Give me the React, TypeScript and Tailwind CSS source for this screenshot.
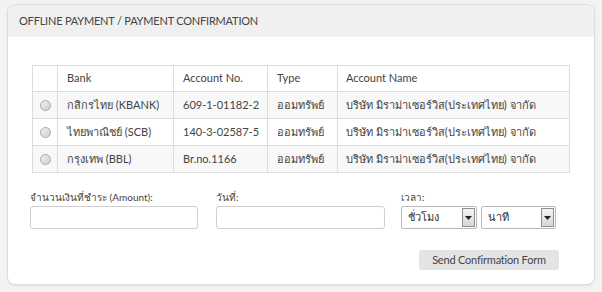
import React from 'react';

const FONT = { fontFamily: 'Lato, "Noto Sans", "DejaVu Sans", sans-serif' };

const banks = [
  { bank: 'กสิกรไทย (KBANK)', account: '609-1-01182-2' },
  { bank: 'ไทยพาณิชย์ (SCB)', account: '140-3-02587-5' },
  { bank: 'กรุงเทพ (BBL)', account: 'Br.no.1166' },
];

const Radio = () => (
  <span className="inline-block w-[11px] h-[11px] rounded-full border border-[#a9a9a9] bg-gradient-to-br from-[#f0f0f0] to-[#cfcfcf]" />
);

const Select = ({ label, width }: { label: string; width: string }) => (
  <div className={`${width} h-[23px] flex items-center border border-[#b9b9b9] rounded-[2px] bg-white`}>
    <span className="flex-1 pl-[6px] text-[11px] text-[#333]">{label}</span>
    <span className="w-[13px] h-[19px] mr-[1px] flex items-center justify-center border border-[#8f8f8f] bg-gradient-to-b from-[#f4f4f4] to-[#d8d8d8]">
      <svg width="7" height="4" viewBox="0 0 7 4">
        <path d="M0 0 L7 0 L3.5 4 Z" fill="#222" />
      </svg>
    </span>
  </div>
);

export default function App() {
  return (
    <div className="w-[602px] h-[292px] bg-[#f3f3f3] pt-[4px] pl-[7px]" style={FONT}>
      <div className="w-[588px] h-[281px] bg-white border border-[#dcdcdc] rounded-[8px] overflow-hidden shadow-[0_1px_2px_rgba(0,0,0,0.08)]">
        <div className="h-[32px] bg-[#f0f0f0] flex items-center pl-[11px] text-[11px] tracking-[-0.2px] text-[#444] uppercase">
          Offline Payment / Payment Confirmation
        </div>

        <div className="pl-[24px] pt-[28px]">
          <table className="border-collapse text-[11px] text-[#444] w-[538px]">
            <thead>
              <tr className="h-[26px]">
                <th className="w-[25px] border border-[#dcdcdc]" />
                <th className="w-[116px] border border-[#dcdcdc] text-left font-normal pl-[9px]">Bank</th>
                <th className="w-[94px] border border-[#dcdcdc] text-left font-normal pl-[9px]">Account No.</th>
                <th className="w-[70px] border border-[#dcdcdc] text-left font-normal pl-[9px]">Type</th>
                <th className="border border-[#dcdcdc] text-left font-normal pl-[8px]">Account Name</th>
              </tr>
            </thead>
            <tbody>
              {banks.map((b, i) => (
                <tr key={b.account} className={`h-[27px] ${i % 2 === 0 ? 'bg-[#f8f8f8]' : 'bg-white'}`}>
                  <td className="border border-[#dcdcdc] text-center">
                    <span className="flex justify-center"><Radio /></span>
                  </td>
                  <td className="border border-[#dcdcdc] pl-[9px]">{b.bank}</td>
                  <td className="border border-[#dcdcdc] pl-[9px]">{b.account}</td>
                  <td className="border border-[#dcdcdc] pl-[9px]">ออมทรัพย์</td>
                  <td className="border border-[#dcdcdc] pl-[8px]">บริษัท มิราม่าเซอร์วิส(ประเทศไทย) จากัด</td>
                </tr>
              ))}
            </tbody>
          </table>
        </div>

        <div className="pl-[22px] pt-[17px] flex text-[10px] text-[#444]">
          <div className="w-[168px] flex flex-col">
            <span className="h-[16px]">จำนวนเงินที่ชำระ (Amount):</span>
            <div className="h-[23px] border border-[#cfcfcf] rounded-[3px] bg-white" />
          </div>
          <div className="w-[169px] ml-[18px] flex flex-col">
            <span className="h-[16px]">วันที่:</span>
            <div className="h-[23px] border border-[#cfcfcf] rounded-[3px] bg-white" />
          </div>
          <div className="ml-[16px] flex flex-col">
            <span className="h-[16px]">เวลา:</span>
            <div className="flex gap-[4px]">
              <Select label="ชั่วโมง" width="w-[76px]" />
              <Select label="นาที" width="w-[75px]" />
            </div>
          </div>
        </div>

        <div className="flex justify-end pr-[35px] pt-[21px]">
          <button className="w-[140px] h-[20px] rounded-[3px] bg-[#e4e4e4] text-[11px] tracking-[-0.2px] text-[#444]">
            Send Confirmation Form
          </button>
        </div>
      </div>
    </div>
  );
}
